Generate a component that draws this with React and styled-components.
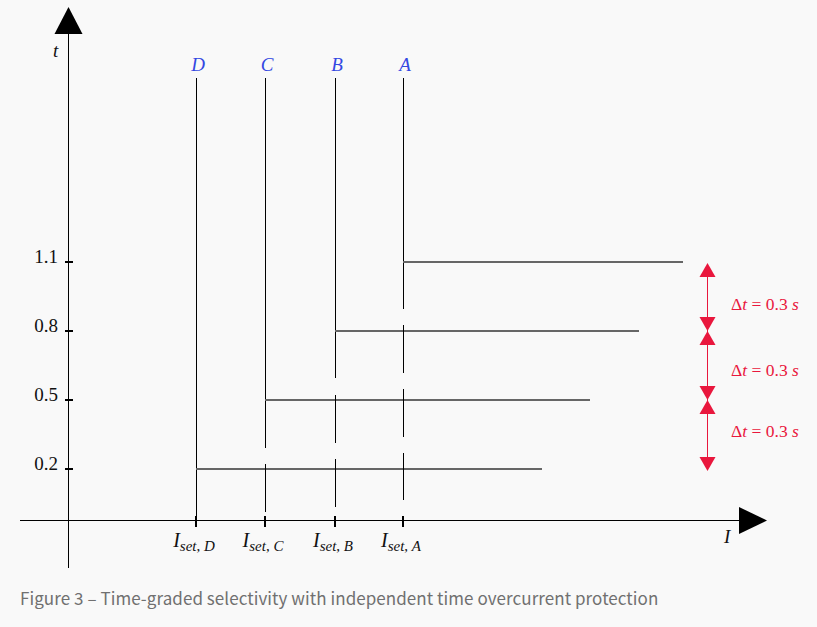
import React from "react";
import styled, { createGlobalStyle } from "styled-components";

const GlobalStyle = createGlobalStyle`
  html, body {
    margin: 0;
    padding: 0;
    background: #f9f9f9;
  }
`;

const Figure = styled.figure`
  margin: 0;
  width: 817px;
  height: 627px;
  display: flex;
  flex-direction: column;
  background: #f9f9f9;
`;

const Chart = styled.svg`
  display: block;
  width: 817px;
  height: 580px;
  font-family: "Liberation Serif", "Times New Roman", serif;
`;

const Rule = styled.line`
  shape-rendering: crispEdges;
  stroke: ${(p) => p.$color || "#000"};
  stroke-width: ${(p) => p.$w || 1}px;
`;

const Caption = styled.figcaption`
  margin: 0;
  padding: 6px 0 0 20px;
  font-family: "Noto Sans CJK KR", "Noto Sans", sans-serif;
  font-size: 17px;
  line-height: 24px;
  color: #707070;
  letter-spacing: 0.06px;
`;

const AXIS_Y = 520;
const RED = "#e9173d";
const BLUE = "#3448e2";

// relay pick-up lines: x, where the solid part stops, the dashes below it, and its trip time
const relays = [
  { name: "D", x: 196, solidEnd: 520, dashes: [], t: 469, tEnd: 542 },
  { name: "C", x: 265, solidEnd: 448, dashes: [[464, 512]], t: 400, tEnd: 590 },
  { name: "B", x: 335, solidEnd: 378, dashes: [[395, 443], [459, 507]], t: 331, tEnd: 639 },
  { name: "A", x: 403, solidEnd: 309, dashes: [[325, 373], [389, 437], [453, 500]], t: 262, tEnd: 683 },
];

const yTicks = [
  { label: "1.1", y: 262 },
  { label: "0.8", y: 331 },
  { label: "0.5", y: 400 },
  { label: "0.2", y: 469 },
];

const deltas = [310, 376, 437];

const RedTri = ({ apex, dir }) => {
  const base = apex + (dir === "up" ? 14 : -14);
  return <polygon points={`707.5,${apex} 699.5,${base} 715.5,${base}`} fill={RED} />;
};

const App = () => {
  return (
    <>
      <GlobalStyle />
      <Figure>
        <Chart viewBox="0 0 817 580">
          {/* axes */}
          <Rule x1="68" y1="32" x2="68" y2="568" />
          <polygon points="68.5,7 54.5,34 82.5,34" fill="#000" />
          <Rule x1="20" y1={AXIS_Y} x2="742" y2={AXIS_Y} />
          <polygon points="767,520.5 739,507 739,534" fill="#000" />
          <text x="53" y="57" fontSize="19" fontStyle="italic" fill="#111">t</text>
          <text x="724" y="543" fontSize="19" fontStyle="italic" fill="#111">I</text>

          {yTicks.map((tk) => (
            <g key={tk.label}>
              <Rule x1="65" y1={tk.y} x2="73" y2={tk.y} $w={2} />
              <text x="58" y={tk.y + 1} fontSize="19" textAnchor="end" fill="#111">
                {tk.label}
              </text>
            </g>
          ))}

          {relays.map((r) => (
            <g key={r.name}>
              <text x={r.x + 2} y="71" fontSize="19" fontStyle="italic" textAnchor="middle" fill={BLUE}>
                {r.name}
              </text>
              <Rule x1={r.x} y1="78" x2={r.x} y2={r.solidEnd} />
              {r.dashes.map(([a, b]) => (
                <Rule key={a} x1={r.x} y1={a} x2={r.x} y2={b} />
              ))}
              <Rule x1={r.x} y1={r.t} x2={r.tEnd} y2={r.t} $color="#666" $w={2} />
              <Rule x1={r.x} y1="516" x2={r.x} y2="527" $w={2} />
              <text x={r.x - 2} y="547" textAnchor="middle" fill="#111" fontStyle="italic">
                <tspan fontSize="20">I</tspan>
                <tspan fontSize="15" dy="4">set</tspan>
                <tspan fontSize="15" fontStyle="normal">, </tspan>
                <tspan fontSize="15">{r.name}</tspan>
              </text>
            </g>
          ))}

          {/* grading intervals */}
          <Rule x1="707" y1="265" x2="707" y2="469" $color={RED} />
          <RedTri apex={263} dir="up" />
          <RedTri apex={331} dir="down" />
          <RedTri apex={331} dir="up" />
          <RedTri apex={400} dir="down" />
          <RedTri apex={400} dir="up" />
          <RedTri apex={471} dir="down" />
          {deltas.map((y) => (
            <text key={y} x="731" y={y} fontSize="17.5" fill={RED}>
              Δ<tspan fontStyle="italic">t</tspan> = 0.3 <tspan fontStyle="italic">s</tspan>
            </text>
          ))}
        </Chart>
        <Caption>Figure 3 – Time-graded selectivity with independent time overcurrent protection</Caption>
      </Figure>
    </>
  );
};

export default App;
